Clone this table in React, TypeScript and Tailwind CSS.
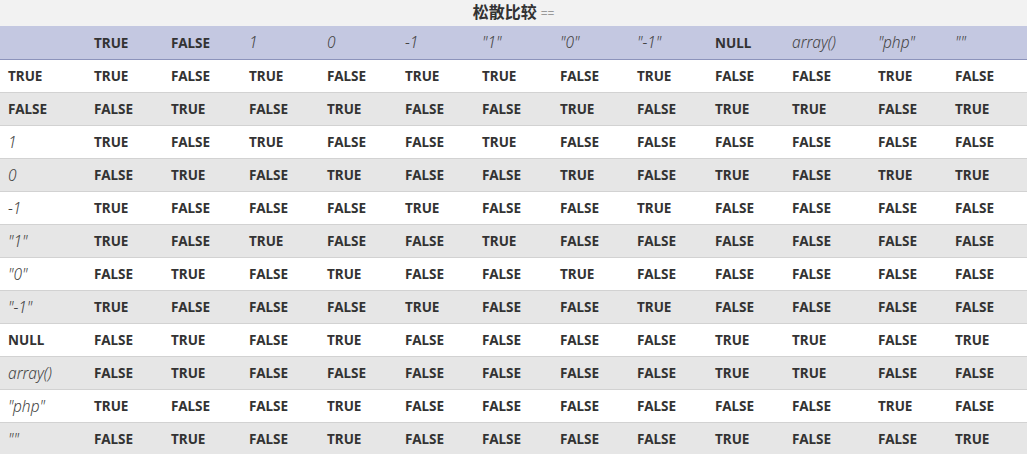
import React from 'react';

type Cell = { text: string; kind: 'b' | 'i' };

const labels: Cell[] = [
  { text: 'TRUE', kind: 'b' },
  { text: 'FALSE', kind: 'b' },
  { text: '1', kind: 'i' },
  { text: '0', kind: 'i' },
  { text: '-1', kind: 'i' },
  { text: '"1"', kind: 'i' },
  { text: '"0"', kind: 'i' },
  { text: '"-1"', kind: 'i' },
  { text: 'NULL', kind: 'b' },
  { text: 'array()', kind: 'i' },
  { text: '"php"', kind: 'i' },
  { text: '""', kind: 'i' }
];

// T = TRUE, F = FALSE
const grid = [
  'TFTFTTFTFFTF',
  'FTFTFFTFTTFT',
  'TFTFFTFFFFFF',
  'FTFTFFTFTFTT',
  'TFFFTFFTFFFF',
  'TFTFFTFFFFFF',
  'FTFTFFTFFFFF',
  'TFFFTFFTFFFF',
  'FTFTFFFFTTFT',
  'FTFFFFFFTTFF',
  'TFFTFFFFFFTF',
  'FTFTFFFFTFFT'
];

const widths = [86, 77, 78, 78, 78, 77, 78, 77, 78, 77, 86, 77, 80];

const Label = ({ cell }: { cell: Cell }) =>
  cell.kind === 'b' ? (
    <span className="inline-block align-middle leading-none font-bold text-[13.5px] text-[#333]">{cell.text}</span>
  ) : (
    <span className="inline-block align-middle leading-none italic font-light text-[15.5px] text-[#444]">{cell.text}</span>
  );

export default function App() {
  return (
    <div className="w-[1027px] h-[454px] overflow-hidden bg-white font-['Noto_Sans','Noto_Sans_CJK_SC',sans-serif]">
      <table className="table-fixed border-collapse w-[1027px]">
        <colgroup>
          {widths.map((w, i) => (
            <col key={i} style={{ width: w }} />
          ))}
        </colgroup>
        <caption className="h-[26px] bg-[#f2f2f2] text-center leading-[25px]">
          <span className="font-bold text-[16px] text-[#333]">松散比较</span>
          <span className="ml-1 text-[12px] text-[#999]">==</span>
        </caption>
        <thead>
          <tr className="h-[33px] bg-[#c4c8e1] border-b border-[#8c93bb]">
            <th className="pl-2"></th>
            {labels.map((c, i) => (
              <th key={i} className="pl-2 text-left font-normal leading-none">
                <Label cell={c} />
              </th>
            ))}
          </tr>
        </thead>
        <tbody>
          {grid.map((row, r) => (
            <tr
              key={r}
              className={`h-[33px] border-b border-[#d2d2d2] ${r % 2 === 1 ? 'bg-[#e6e6e6]' : 'bg-white'}`}
            >
              <td className="pl-2 text-left leading-none">
                <Label cell={labels[r]} />
              </td>
              {row.split('').map((v, c) => (
                <td key={c} className="pl-2 text-left leading-none">
                  <span className="inline-block align-middle leading-none font-bold text-[13.5px] text-[#333]">
                    {v === 'T' ? 'TRUE' : 'FALSE'}
                  </span>
                </td>
              ))}
            </tr>
          ))}
        </tbody>
      </table>
    </div>
  );
}
